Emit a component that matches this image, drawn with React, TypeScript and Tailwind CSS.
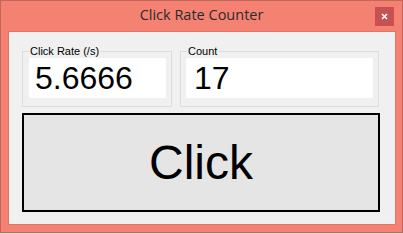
import React, { useState } from 'react';

const App: React.FC = () => {
  const [count, setCount] = useState(17);
  const rate = '5.6666';

  return (
    <div className="w-[403px] h-[234px] bg-[#d9d9d9]">
      {/* Window frame */}
      <div className="w-[403px] h-[233px] bg-[#f58173] border border-[#c0685d] flex flex-col">
        {/* Title bar */}
        <div className="relative h-[30px] flex items-center justify-center">
          <span
            className="text-[14.5px] text-[#2b2b2b] leading-none -mt-[2px]"
            style={{ fontFamily: '"Open Sans", "Noto Sans", sans-serif' }}
          >
            Click Rate Counter
          </span>
          <button className="absolute right-[8px] top-[6px] w-[19px] h-[19px] bg-[#c75050] flex items-center justify-center">
            <svg width="7" height="7" viewBox="0 0 7 7">
              <path d="M1 1 L6 6 M6 1 L1 6" stroke="#fff" strokeWidth="1.6" />
            </svg>
          </button>
        </div>

        {/* Client area */}
        <div
          className="ml-[7px] mr-[6px] mb-[7px] flex-1 bg-[#f0f0f0] border border-[#e0766a] flex flex-col px-[13px] pt-[13px]"
          style={{ fontFamily: '"Liberation Sans", Arial, sans-serif' }}
        >
          <div className="flex gap-[8px]">
            <fieldset className="w-[150px] h-[62px] border border-[#dcdcdc] px-[6px] pb-[2px]">
              <legend className="ml-[0px] px-[1px] text-[11px] leading-[13px] text-black">Click Rate (/s)</legend>
              <div className="bg-white h-[40px] mr-[-1px] flex items-center pl-[6px] text-[32px] leading-none text-black">
                {rate}
              </div>
            </fieldset>
            <fieldset className="w-[199px] h-[62px] border border-[#dcdcdc] px-[5px] pb-[2px]">
              <legend className="ml-[1px] px-[1px] text-[11px] leading-[13px] text-black">Count</legend>
              <div className="bg-white h-[40px] flex items-center pl-[8px] text-[32px] leading-none text-black">
                {count}
              </div>
            </fieldset>
          </div>

          <button
            onClick={() => setCount((c) => c + 1)}
            className="mt-[6px] w-[358px] h-[99px] bg-[#e5e5e5] border-2 border-black flex items-center justify-center text-[48px] leading-none text-black"
          >
            Click
          </button>
        </div>
      </div>
    </div>
  );
};

export default App;
